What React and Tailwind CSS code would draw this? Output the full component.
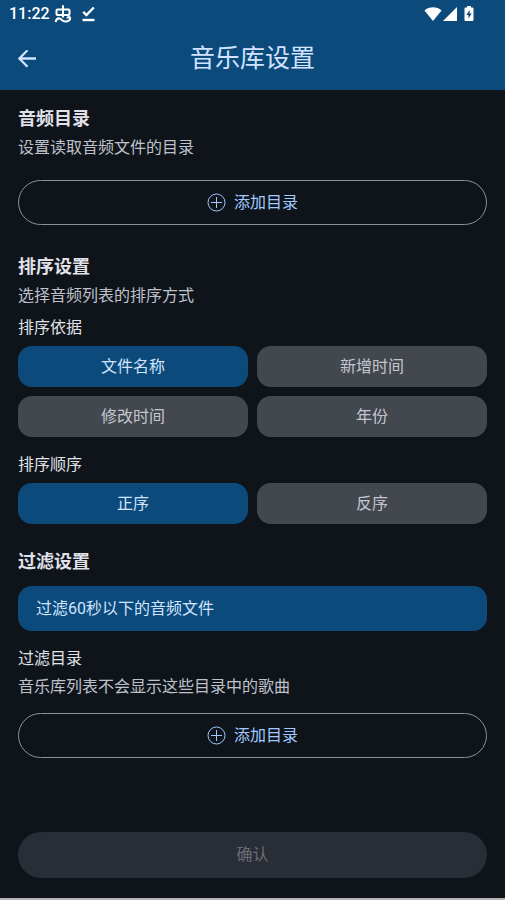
import { useState } from 'react';

const SORT_KEYS = ['文件名称', '新增时间', '修改时间', '年份'];
const SORT_ORDERS = ['正序', '反序'];

function StatusBar() {
  return (
    <div className="flex h-7 items-center justify-between pl-[9px] pr-[30px] text-white">
      <div className="flex items-center">
        <span className="text-[16px] font-medium leading-7">11:22</span>
        <svg className="ml-[4px]" width="18" height="18" viewBox="0 0 18 18" fill="none" stroke="currentColor" strokeWidth="2" aria-hidden="true">
          <path d="M9 0.300V12.500M3.500 10q-1 0-1-1V5.500q0-1 1-1h11q1 0 1 1V9q0 1-1 1z" />
          <path d="M1.500 17c.8-2.600 2.400-4 4.200-3.500 2.200.6 2.600 2.800 5.400 3 3 .2 5.300-1.300 5.100-3.300-.2-1.700-2.900-1.400-2.700.3" />
        </svg>
        <svg className="ml-[10px]" width="13" height="16" viewBox="0 0 13 16" fill="none" stroke="currentColor" strokeWidth="2.400" aria-hidden="true">
          <path d="M1.200 5.900l3.200 3.200L11.800 1.500" />
          <path d="M0.500 14h12" />
        </svg>
      </div>
      <div className="flex items-center">
        <svg width="18" height="14" viewBox="0 0 18 14" fill="currentColor" aria-hidden="true">
          <path d="M9 14L0.500 3.500C5-.8 13-.8 17.500 3.500z" />
        </svg>
        <svg className="ml-px" width="14" height="14" viewBox="0 0 14 14" fill="currentColor" aria-hidden="true">
          <path d="M14 0v14H0z" />
        </svg>
        <svg className="ml-[7px] mr-px" width="10" height="16" viewBox="0 0 10 16" aria-hidden="true">
          <path fill="currentColor" d="M3 0h4v1.500h1.500q1 0 1 1V14q0 1-1 1h-7q-1 0-1-1V2.500q0-1 1-1H3z" />
          <path fill="#0c4a7c" d="M5.600 4L2.400 9.100h2.100v3.400l3.200-5H5.600z" />
        </svg>
      </div>
    </div>
  );
}

function Heading({ children }) {
  return <h2 className="text-[18px] font-bold leading-[30px] text-[#e1e2e9]">{children}</h2>;
}

function Description({ children }) {
  return <p className="leading-7 text-[#bfc2ca]">{children}</p>;
}

function AddDirectoryButton() {
  return (
    <button type="button" className="flex h-[45px] w-full items-center justify-center gap-2 rounded-full border border-[#8c9099] text-[#a0caff]">
      <svg width="19" height="19" viewBox="0 0 19 19" fill="none" stroke="currentColor" aria-hidden="true">
        <circle cx="9.500" cy="9.500" r="8.500" />
        <path d="M9.500 4v11M4 9.500h11" />
      </svg>
      添加目录
    </button>
  );
}

function OptionGroup({ id, label, options, value, onChange }) {
  return (
    <div role="group" aria-labelledby={id}>
      <h3 id={id} className="mb-1 leading-7 text-[#e1e2e9]">{label}</h3>
      <div className="grid grid-cols-2 gap-[9px]">
        {options.map((option) => (
          <button
            key={option}
            type="button"
            aria-pressed={option === value}
            onClick={() => onChange(option)}
            className={
              option === value
                ? 'h-[41px] rounded-[14px] bg-[#0c4a7c] text-[#d1e4ff]'
                : 'h-[41px] rounded-[14px] bg-[#43474e] text-[#c3c6cf]'
            }
          >
            {option}
          </button>
        ))}
      </div>
    </div>
  );
}

export default function App() {
  const [sortKey, setSortKey] = useState('文件名称');
  const [sortOrder, setSortOrder] = useState('正序');
  const [filterShort, setFilterShort] = useState(true);

  return (
    <div className="flex min-h-screen flex-col border-b-2 border-[#b9b5b7] bg-[#0f141b] font-[Roboto,'Noto_Sans_CJK_SC',sans-serif] text-[16px]">
      <header className="bg-[#0c4a7c]">
        <StatusBar />
        <div className="grid h-[62px] grid-cols-[40px_1fr_40px] items-center px-[7px] text-[#d1e4ff]">
          <button type="button" aria-label="返回" className="flex size-10 items-center justify-center">
            <svg width="18" height="18" viewBox="0 0 18 18" fill="none" stroke="currentColor" strokeWidth="2.300" aria-hidden="true">
              <path d="M18 8.500H1.500M9.500 0.300L1.300 8.500l8.200 8.200" />
            </svg>
          </button>
          <h1 className="text-center text-[25px] leading-9">音乐库设置</h1>
        </div>
      </header>

      <main className="flex-1 px-[18px] pt-[14px]">
        <section>
          <Heading>音频目录</Heading>
          <Description>设置读取音频文件的目录</Description>
          <div className="mt-[18px]">
            <AddDirectoryButton />
          </div>
        </section>

        <section className="mt-[27px]">
          <Heading>排序设置</Heading>
          <Description>选择音频列表的排序方式</Description>
          <div className="mt-1 flex flex-col gap-[14px]">
            <OptionGroup id="sort-key" label="排序依据" options={SORT_KEYS} value={sortKey} onChange={setSortKey} />
            <OptionGroup id="sort-order" label="排序顺序" options={SORT_ORDERS} value={sortOrder} onChange={setSortOrder} />
          </div>
        </section>

        <section className="mt-[23px]">
          <Heading>过滤设置</Heading>
          <button
            type="button"
            aria-pressed={filterShort}
            onClick={() => setFilterShort(!filterShort)}
            className={
              filterShort
                ? 'mt-[9px] h-[45px] w-full rounded-[14px] bg-[#0c4a7c] px-[18px] text-left text-[#d1e4ff]'
                : 'mt-[9px] h-[45px] w-full rounded-[14px] bg-[#43474e] px-[18px] text-left text-[#c3c6cf]'
            }
          >
            过滤60秒以下的音频文件
          </button>
          <h3 className="mt-[14px] leading-7 text-[#e1e2e9]">过滤目录</h3>
          <Description>音乐库列表不会显示这些目录中的歌曲</Description>
          <div className="mt-3">
            <AddDirectoryButton />
          </div>
        </section>
      </main>

      <footer className="px-[18px] pb-5 pt-6">
        <button type="button" disabled className="h-[46px] w-full rounded-full bg-[#292d35] text-[#6b6e75]">
          确认
        </button>
      </footer>
    </div>
  );
}
